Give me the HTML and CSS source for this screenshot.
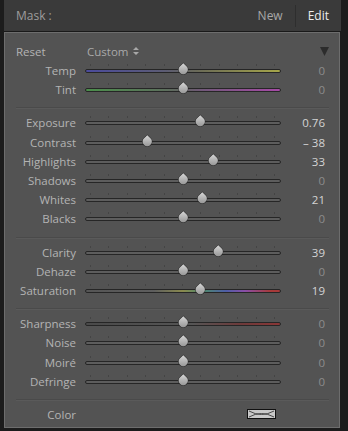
FILE: index.html
```html
<!DOCTYPE html>
<html lang="en">
<head>
    <meta charset="UTF-8">
    <meta name="viewport" content="width=device-width, initial-scale=1.0">
    <title>Mask</title>
    <link rel="stylesheet" href="styles.css">
</head>
<body>
    <div class="frame">
        <div class="topbar">
            <span class="mask-label">Mask :</span>
            <div class="mode-tabs">
                <span class="tab">New</span>
                <span class="tab-sep"></span>
                <span class="tab active">Edit</span>
            </div>
        </div>

        <div class="panel">
            <div class="panel-head">
                <span class="reset">Reset</span>
                <span class="preset">Custom
                    <svg class="updown" width="6" height="8" viewBox="0 0 6 8"><path d="M3 0 L6 3 L0 3 Z M0 5 L6 5 L3 8 Z" fill="#a8a8a8"/></svg>
                </span>
                <svg class="collapse" width="9" height="9" viewBox="0 0 9 9"><path d="M0 0 L9 0 L4.5 9 Z" fill="#2c2c2c"/></svg>
            </div>

            <!-- white balance -->
            <div class="group first">
                <div class="row"><span class="label">Temp</span><div class="track temp"><span class="thumb" style="left:50%"></span></div><span class="value zero">0</span></div>
                <div class="row"><span class="label">Tint</span><div class="track tint"><span class="thumb" style="left:50%"></span></div><span class="value zero">0</span></div>
            </div>
            <div class="divider"></div>

            <!-- tone -->
            <div class="group">
                <div class="row"><span class="label">Exposure</span><div class="track"><span class="thumb" style="left:58.7%"></span></div><span class="value">0.76</span></div>
                <div class="row"><span class="label">Contrast</span><div class="track"><span class="thumb" style="left:31.6%"></span></div><span class="value">– 38</span></div>
                <div class="row"><span class="label">Highlights</span><div class="track"><span class="thumb" style="left:65.5%"></span></div><span class="value">33</span></div>
                <div class="row"><span class="label">Shadows</span><div class="track"><span class="thumb" style="left:50%"></span></div><span class="value zero">0</span></div>
                <div class="row"><span class="label">Whites</span><div class="track"><span class="thumb" style="left:59.8%"></span></div><span class="value">21</span></div>
                <div class="row"><span class="label">Blacks</span><div class="track"><span class="thumb" style="left:50%"></span></div><span class="value zero">0</span></div>
            </div>
            <div class="divider"></div>

            <!-- presence -->
            <div class="group">
                <div class="row"><span class="label">Clarity</span><div class="track"><span class="thumb" style="left:68.4%"></span></div><span class="value">39</span></div>
                <div class="row"><span class="label">Dehaze</span><div class="track"><span class="thumb" style="left:50%"></span></div><span class="value zero">0</span></div>
                <div class="row"><span class="label">Saturation</span><div class="track saturation"><span class="thumb" style="left:58.7%"></span></div><span class="value">19</span></div>
            </div>
            <div class="divider"></div>

            <!-- detail -->
            <div class="group">
                <div class="row"><span class="label">Sharpness</span><div class="track sharpness"><span class="thumb" style="left:50%"></span></div><span class="value zero">0</span></div>
                <div class="row"><span class="label">Noise</span><div class="track"><span class="thumb" style="left:50%"></span></div><span class="value zero">0</span></div>
                <div class="row"><span class="label">Moiré</span><div class="track"><span class="thumb" style="left:50%"></span></div><span class="value zero">0</span></div>
                <div class="row"><span class="label">Defringe</span><div class="track"><span class="thumb" style="left:50%"></span></div><span class="value zero">0</span></div>
            </div>
            <div class="divider"></div>

            <div class="group">
                <div class="row">
                    <span class="label">Color</span>
                    <div class="swatch-cell">
                        <svg class="swatch" width="29" height="10" viewBox="0 0 29 10">
                            <rect x="0.5" y="0.5" width="28" height="9" fill="#c9c9c9" stroke="#111"/>
                            <path d="M2 2 Q14.5 9 27 2 M2 8 Q14.5 1 27 8" fill="none" stroke="#3a3a3a" stroke-width="0.9"/>
                        </svg>
                    </div>
                    <span class="value"></span>
                </div>
            </div>
        </div>
    </div>
</body>
</html>
```

FILE: styles.css
```css
body {
    margin: 0;
    background-color: #1c1c1c;
    font-family: "Open Sans", "Noto Sans", sans-serif;
    color: #b3b3b3;
}
.frame {
    width: 348px;
    height: 431px;
    padding: 0 7px 0 4px;
    box-sizing: border-box;
}
.topbar {
    height: 31px;
    background-color: #3a3a3a;
    border-bottom: 1px solid #191919;
    display: flex;
    align-items: center;
    justify-content: space-between;
    padding: 0 12px;
    font-size: 12px;
}
.mask-label {
    color: #9d9d9d;
}
.mode-tabs {
    display: flex;
    align-items: center;
    gap: 12px;
}
.tab {
    color: #a8a8a8;
}
.tab.active {
    color: #ededed;
}
.tab-sep {
    width: 1px;
    height: 22px;
    background-color: #2e2e2e;
}
.panel {
    height: 396px;
    margin-right: 1px;
    background-color: #535353;
    border: 1px solid #6d6d6d;
    box-sizing: border-box;
    font-size: 11.5px;
}
.panel-head {
    height: 20px;
    margin-top: 8px;
    padding: 0 10px 0 11px;
    display: flex;
    align-items: center;
}
.reset {
    width: 71px;
}
.preset {
    display: flex;
    align-items: center;
    gap: 5px;
    color: #a9a9a9;
}
.collapse {
    margin-left: auto;
}
.group {
    padding: 5px 0 8px;
}
.group.first {
    padding-top: 0;
}
.divider {
    height: 1px;
    margin: 0 10px 0 11px;
    background-color: #4a4a4a;
    border-bottom: 1px solid #5a5a5a;
    margin-bottom: -1px;
}
.row {
    height: 19.2px;
    display: grid;
    grid-template-columns: 80px 196px 1fr;
    align-items: center;
}
.label {
    text-align: right;
    padding-right: 9px;
}
.value {
    text-align: right;
    padding-right: 14px;
    color: #d4d4d4;
}
.value.zero {
    color: #8c8c8c;
}
.track {
    position: relative;
    height: 4px;
    margin-top: 1px;
    box-sizing: border-box;
    border: 1px solid #262626;
    border-radius: 2px;
    background-color: #5d5d5d;
}
.track::before {
    content: "";
    position: absolute;
    left: 4px;
    top: -6px;
    width: 186px;
    height: 2px;
    background: repeating-linear-gradient(to right, #444 0 1px, transparent 1px 18.4px);
}
.track.temp {
    background: linear-gradient(to right, #4b4b9c, #5c5c74 40%, #626262 50%, #6e6e56 60%, #a6a64a);
}
.track.tint {
    background: linear-gradient(to right, #4b8e4b, #5c705c 40%, #626262 50%, #72587a 60%, #a64aa6);
}
.track.saturation {
    background: linear-gradient(to right, #555, #5e5e5e 35%, #8a8a4e 50%, #4e8a6a 60%, #4e5ea6 72%, #8a4ea6 82%, #a63a3a 95%);
}
.track.sharpness {
    background: linear-gradient(to right, #4a4a4a, #555 55%, #6e3a3a 80%, #8a3636);
}
.thumb {
    position: absolute;
    top: -5px;
    width: 8.5px;
    height: 8.5px;
    margin-left: -4.25px;
    border-radius: 0 50% 50% 50%;
    transform: rotate(45deg);
    background: linear-gradient(135deg, #d6d6d6, #8e8e8e);
    box-shadow: 0 0 0 0.6px #2a2a2a;
}
.swatch-cell {
    display: flex;
    justify-content: flex-end;
    padding-right: 5px;
}
.swatch {
    display: block;
}
```
